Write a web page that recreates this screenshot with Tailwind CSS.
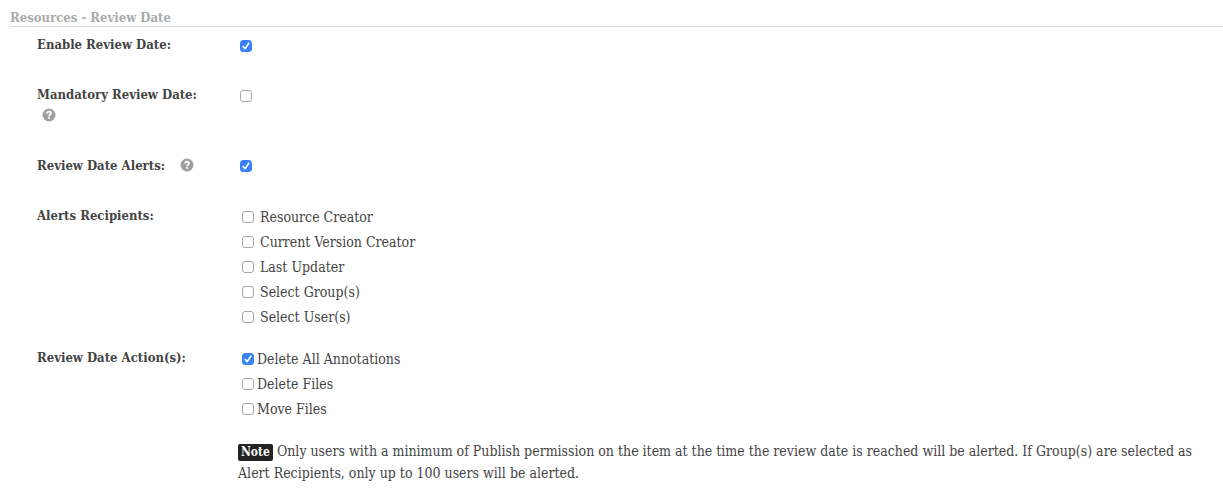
<!DOCTYPE html>
<html lang="en">
<head>
    <meta charset="UTF-8">
    <meta name="viewport" content="width=device-width, initial-scale=1.0">
    <script src="https://cdn.jsdelivr.net/npm/@tailwindcss/browser@4"></script>
    <title>Resources - Review Date</title>
</head>
<body class="bg-white font-['DejaVu_Serif_Condensed','DejaVu_Serif',serif] text-[14px] leading-[20px] text-[#444444]">

    <!-- Check mark and help icon shared by the rows below -->
    <svg class="hidden">
        <symbol id="check" viewBox="0 0 12 12">
            <path d="M3.2 6.5 5.1 8.7 8.8 3.2" fill="none" stroke="#fff" stroke-width="1.6" stroke-linecap="round" stroke-linejoin="round" />
        </symbol>
        <symbol id="help" viewBox="0 0 14 14">
            <circle cx="7" cy="7" r="6.5" fill="#a0a0a0" />
            <path d="M5 5.4C5.1 4.1 5.9 3.6 7 3.6c1.2 0 2 .7 2 1.7C9 6.5 7.1 6.6 7.1 8.2" fill="none" stroke="#fff" stroke-width="1.7" />
            <rect x="6.2" y="9.1" width="1.8" height="1.7" fill="#fff" />
        </symbol>
    </svg>

    <form class="pt-[8px] pl-[10px]">
        <h2 class="h-[19px] border-b border-[#dddddd] leading-[20px] font-bold text-[13px] text-[#aaaaaa]">Resources - Review Date</h2>

        <div class="pt-[8px] pl-[27px]">
            <!-- Enable Review Date -->
            <div class="flex mb-[30px]">
                <label for="enableReview" class="w-[203px] shrink-0 font-bold text-[13px]">Enable Review Date:</label>
                <span class="grid mt-[5px] size-[12px]">
                    <input type="checkbox" id="enableReview" checked class="peer col-start-1 row-start-1 size-[12px] appearance-none rounded-[3px] border border-[#a6a6a6] bg-white checked:border-[#3b82f7] checked:bg-[#3b82f7]">
                    <svg class="pointer-events-none col-start-1 row-start-1 size-[12px] invisible peer-checked:visible"><use href="#check" /></svg>
                </span>
            </div>

            <!-- Mandatory Review Date -->
            <div class="flex mb-[29px]">
                <div class="w-[203px] shrink-0">
                    <label for="mandatoryReview" class="block font-bold text-[13px]">Mandatory Review Date:</label>
                    <button type="button" aria-label="Help" class="block my-[3px] ml-[5px]"><svg class="size-[14px]"><use href="#help" /></svg></button>
                </div>
                <span class="grid mt-[5px] size-[12px]">
                    <input type="checkbox" id="mandatoryReview" class="peer col-start-1 row-start-1 size-[12px] appearance-none rounded-[3px] border border-[#a6a6a6] bg-white checked:border-[#3b82f7] checked:bg-[#3b82f7]">
                    <svg class="pointer-events-none col-start-1 row-start-1 size-[12px] invisible peer-checked:visible"><use href="#check" /></svg>
                </span>
            </div>

            <!-- Review Date Alerts -->
            <div class="flex mb-[28px]">
                <div class="flex w-[203px] shrink-0 items-center gap-[15px]">
                    <label for="reviewAlerts" class="pt-[2px] font-bold text-[13px]">Review Date Alerts:</label>
                    <button type="button" aria-label="Help"><svg class="size-[14px]"><use href="#help" /></svg></button>
                </div>
                <span class="grid mt-[6px] size-[12px]">
                    <input type="checkbox" id="reviewAlerts" checked class="peer col-start-1 row-start-1 size-[12px] appearance-none rounded-[3px] border border-[#a6a6a6] bg-white checked:border-[#3b82f7] checked:bg-[#3b82f7]">
                    <svg class="pointer-events-none col-start-1 row-start-1 size-[12px] invisible peer-checked:visible"><use href="#check" /></svg>
                </span>
            </div>

            <!-- Alerts Recipients -->
            <div role="group" aria-labelledby="recipients" class="flex mb-[17px]">
                <span id="recipients" class="w-[205px] shrink-0 pt-[2px] font-bold text-[13px]">Alerts Recipients:</span>
                <div>
                    <label class="flex h-[25px] items-center gap-[6px]">
                        <input type="checkbox" class="size-[12px] appearance-none rounded-[3px] border border-[#a6a6a6] bg-white checked:bg-[#3b82f7]">
                        Resource Creator
                    </label>
                    <label class="flex h-[25px] items-center gap-[6px]">
                        <input type="checkbox" class="size-[12px] appearance-none rounded-[3px] border border-[#a6a6a6] bg-white checked:bg-[#3b82f7]">
                        Current Version Creator
                    </label>
                    <label class="flex h-[25px] items-center gap-[6px]">
                        <input type="checkbox" class="size-[12px] appearance-none rounded-[3px] border border-[#a6a6a6] bg-white checked:bg-[#3b82f7]">
                        Last Updater
                    </label>
                    <label class="flex h-[25px] items-center gap-[6px]">
                        <input type="checkbox" class="size-[12px] appearance-none rounded-[3px] border border-[#a6a6a6] bg-white checked:bg-[#3b82f7]">
                        Select Group(s)
                    </label>
                    <label class="flex h-[25px] items-center gap-[6px]">
                        <input type="checkbox" class="size-[12px] appearance-none rounded-[3px] border border-[#a6a6a6] bg-white checked:bg-[#3b82f7]">
                        Select User(s)
                    </label>
                </div>
            </div>

            <!-- Review Date Actions -->
            <div role="group" aria-labelledby="actions" class="flex">
                <span id="actions" class="w-[205px] shrink-0 pt-[2px] font-bold text-[13px]">Review Date Action(s):</span>
                <div>
                    <label class="flex h-[25px] items-center gap-[3px]">
                        <span class="grid size-[12px]">
                            <input type="checkbox" checked class="peer col-start-1 row-start-1 size-[12px] appearance-none rounded-[3px] border border-[#a6a6a6] bg-white checked:border-[#3b82f7] checked:bg-[#3b82f7]">
                            <svg class="pointer-events-none col-start-1 row-start-1 size-[12px] invisible peer-checked:visible"><use href="#check" /></svg>
                        </span>
                        Delete All Annotations
                    </label>
                    <label class="flex h-[25px] items-center gap-[3px]">
                        <input type="checkbox" class="size-[12px] appearance-none rounded-[3px] border border-[#a6a6a6] bg-white checked:bg-[#3b82f7]">
                        Delete Files
                    </label>
                    <label class="flex h-[25px] items-center gap-[3px]">
                        <input type="checkbox" class="size-[12px] appearance-none rounded-[3px] border border-[#a6a6a6] bg-white checked:bg-[#3b82f7]">
                        Move Files
                    </label>
                </div>
            </div>

            <p class="mt-[19px] ml-[201px] leading-[22px]">
                <span class="inline-block rounded-[2px] bg-[#222222] px-[3px] leading-[17px] text-[12px] font-bold text-white">Note</span>
                Only users with a minimum of Publish permission on the item at the time the review date is reached will be alerted. If Group(s) are selected as Alert Recipients, only up to 100 users will be alerted.
            </p>
        </div>
    </form>

</body>
</html>
